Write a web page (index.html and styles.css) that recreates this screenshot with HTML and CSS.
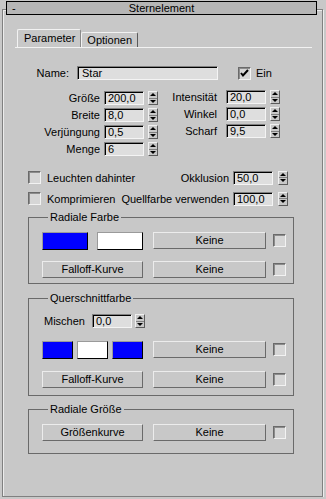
FILE: index.html
```html
<!DOCTYPE html>
<html>
<head>
	<title>Sternelement</title>
	<link rel="stylesheet" href="styles.css">
</head>
<body>
	<div class="rollout">
		<div class="rollout-title">
			<span class="minus">-</span>
			<span class="title">Sternelement</span>
		</div>

		<div class="tabs">
			<div class="tab active">Parameter</div>
			<div class="tab">Optionen</div>
		</div>

		<div class="name-row">
			<span class="name-label">Name:</span>
			<div class="field name-field">Star</div>
			<span class="check checked">
				<svg width="9" height="9" viewBox="0 0 9 9"><path d="M1 4 L3 6.5 L8 1" fill="none" stroke="#000" stroke-width="2"/></svg>
			</span>
			<span class="ein">Ein</span>
		</div>

		<div class="params">
			<div class="col col-left">
				<div class="prow"><span class="plabel">Größe</span><div class="field num">200,0</div><div class="spin"><i class="up"></i><i class="dn"></i></div></div>
				<div class="prow"><span class="plabel">Breite</span><div class="field num">8,0</div><div class="spin"><i class="up"></i><i class="dn"></i></div></div>
				<div class="prow"><span class="plabel">Verjüngung</span><div class="field num">0,5</div><div class="spin"><i class="up"></i><i class="dn"></i></div></div>
				<div class="prow"><span class="plabel">Menge</span><div class="field num">6</div><div class="spin"><i class="up"></i><i class="dn"></i></div></div>
			</div>
			<div class="col col-right">
				<div class="prow"><span class="plabel">Intensität</span><div class="field num">20,0</div><div class="spin"><i class="up"></i><i class="dn"></i></div></div>
				<div class="prow"><span class="plabel">Winkel</span><div class="field num">0,0</div><div class="spin"><i class="up"></i><i class="dn"></i></div></div>
				<div class="prow"><span class="plabel">Scharf</span><div class="field num">9,5</div><div class="spin"><i class="up"></i><i class="dn"></i></div></div>
			</div>
		</div>

		<div class="opts">
			<div class="orow">
				<span class="check"></span>
				<span class="otext">Leuchten dahinter</span>
				<span class="olabel">Okklusion</span>
				<div class="field num">50,0</div>
				<div class="spin"><i class="up"></i><i class="dn"></i></div>
			</div>
			<div class="orow">
				<span class="check"></span>
				<span class="otext">Komprimieren</span>
				<span class="olabel">Quellfarbe verwenden</span>
				<div class="field num">100,0</div>
				<div class="spin"><i class="up"></i><i class="dn"></i></div>
			</div>
		</div>

		<fieldset class="group group-radial">
			<legend>Radiale Farbe</legend>
			<div class="grow">
				<div class="left-part">
					<span class="swatch wide blue"></span>
					<span class="swatch wide white"></span>
				</div>
				<div class="btn keine">Keine</div>
				<span class="check"></span>
			</div>
			<div class="grow">
				<div class="btn curve">Falloff-Kurve</div>
				<div class="btn keine">Keine</div>
				<span class="check"></span>
			</div>
		</fieldset>

		<fieldset class="group group-cross">
			<legend>Querschnittfarbe</legend>
			<div class="mix-row">
				<span class="mix-label">Mischen</span>
				<div class="field num">0,0</div>
				<div class="spin"><i class="up"></i><i class="dn"></i></div>
			</div>
			<div class="grow">
				<div class="left-part">
					<span class="swatch narrow blue"></span>
					<span class="swatch narrow white"></span>
					<span class="swatch narrow blue"></span>
				</div>
				<div class="btn keine">Keine</div>
				<span class="check"></span>
			</div>
			<div class="grow">
				<div class="btn curve">Falloff-Kurve</div>
				<div class="btn keine">Keine</div>
				<span class="check"></span>
			</div>
		</fieldset>

		<fieldset class="group group-size">
			<legend>Radiale Größe</legend>
			<div class="grow">
				<div class="btn curve">Größenkurve</div>
				<div class="btn keine">Keine</div>
				<span class="check"></span>
			</div>
		</fieldset>
	</div>
</body>
</html>
```

FILE: styles.css
```css
body{
	margin: 0;
	background-color: #c8c8c8;
	font-family: "Liberation Sans", Arial, sans-serif;
	font-size: 11px;
	color: #000;
}
.rollout{
	margin: 9px 3px 0 2px;
	height: 488px;
	box-sizing: border-box;
	border: 1px solid #808080;
	box-shadow: inset 1px 1px 0 #ececec, 1px 1px 0 #ececec;
}
.rollout-title{
	margin: -9px 5px 0 3px;
	height: 14px;
	box-sizing: border-box;
	border: 1px solid #000;
	background-color: #b6b6b6;
	display: flex;
	align-items: center;
	line-height: 12px;
}
.minus{
	width: 10px;
	padding-left: 5px;
}
.title{
	flex: 1;
	text-align: center;
	padding-right: 15px;
}

/* tabs */
.tabs{
	display: flex;
	align-items: flex-end;
	margin: 14px 10px 0 12px;
	border-bottom: 1px solid #f2f2f2;
	height: 18px;
}
.tab{
	height: 15px;
	line-height: 14px;
	padding: 0 5px;
	border-top: 1px solid #f2f2f2;
	border-left: 1px solid #f2f2f2;
	border-right: 1px solid #5a5a5a;
	border-radius: 2px 2px 0 0;
	box-sizing: border-box;
}
.tab.active{
	height: 18px;
	line-height: 17px;
	margin-left: 2px;
	padding: 0 5px 0 6px;
	border-right-color: #8a8a8a;
}

/* generic controls */
.field{
	box-sizing: border-box;
	height: 14px;
	background-color: #dedede;
	border: 1px solid;
	border-color: #808080 #f4f4f4 #f4f4f4 #808080;
	box-shadow: inset 1px 1px 0 #000;
	line-height: 12px;
	padding-left: 3px;
	white-space: nowrap;
}
.num{
	width: 40px;
}
.spin{
	box-sizing: border-box;
	width: 10px;
	height: 14px;
	border: 1px solid;
	border-color: #f0f0f0 #5c5c5c #5c5c5c #f0f0f0;
	display: flex;
	flex-direction: column;
}
.spin i{
	flex: 1;
	display: flex;
	align-items: center;
	justify-content: center;
}
.spin i.up{
	border-bottom: 1px solid #808080;
}
.spin i.up::after{
	content: "";
	border-left: 3px solid transparent;
	border-right: 3px solid transparent;
	border-bottom: 3px solid #000;
}
.spin i.dn::after{
	content: "";
	border-left: 3px solid transparent;
	border-right: 3px solid transparent;
	border-top: 3px solid #000;
}
.check{
	box-sizing: border-box;
	width: 13px;
	height: 13px;
	flex: none;
	background-color: #d6d6d6;
	border: 1px solid;
	border-color: #6a6a6a #f2f2f2 #f2f2f2 #6a6a6a;
	box-shadow: inset 1px 1px 0 #8c8c8c;
	display: flex;
	align-items: center;
	justify-content: center;
}
.btn{
	box-sizing: border-box;
	height: 17px;
	border: 1px solid;
	border-color: #ececec #6a6a6a #6a6a6a #ececec;
	text-align: center;
	line-height: 15px;
}
.swatch{
	box-sizing: border-box;
	height: 18px;
	border: 1px solid;
	border-color: #9a9a9a #000 #000 #9a9a9a;
}
.swatch.blue{
	background-color: #0000ff;
}
.swatch.white{
	background-color: #ffffff;
}
.swatch.wide{
	width: 46px;
}
.swatch.narrow{
	width: 31px;
}

/* name row */
.name-row{
	display: flex;
	align-items: center;
	margin-top: 18px;
	height: 14px;
}
.name-label{
	width: 66px;
	text-align: right;
	margin-right: 8px;
}
.name-field{
	width: 141px;
	padding-left: 4px;
}
.name-row .check{
	margin-left: 20px;
}
.ein{
	margin-left: 5px;
}

/* parameter columns */
.params{
	display: flex;
	margin-top: 11px;
}
.col{
	display: flex;
	flex-direction: column;
	gap: 3px;
}
.col-right{
	margin-top: -1px;
}
.prow{
	display: flex;
	align-items: center;
	height: 14px;
}
.plabel{
	text-align: right;
	white-space: nowrap;
}
.col-left .plabel{
	width: 97px;
	margin-right: 4px;
}
.col-right .plabel{
	width: 59px;
	margin-right: 9px;
}
.prow .spin{
	margin-left: 4px;
}

/* options */
.opts{
	margin: 14px 34px 0 25px;
	display: flex;
	flex-direction: column;
	gap: 6px;
}
.orow{
	display: flex;
	align-items: center;
	height: 15px;
}
.otext{
	margin-left: 6px;
	flex: 1;
}
.olabel{
	margin-right: 4px;
}
.orow .spin{
	margin-left: 5px;
}

/* groups */
.group{
	margin: 0 0 0 25px;
	width: 266px;
	box-sizing: border-box;
	border: 1px solid #6a6a6a;
	padding: 0 0 0 13px;
}
.group legend{
	padding: 0 2px;
	margin-left: 6px;
	line-height: 13px;
}
.group-radial{
	margin-top: 5px;
	padding-top: 8px;
	padding-bottom: 5px;
}
.group-cross{
	margin-top: 8px;
	padding-top: 9px;
	padding-bottom: 7px;
}
.group-size{
	margin-top: 7px;
	padding-top: 8px;
	padding-bottom: 12px;
}
.grow{
	display: flex;
	align-items: center;
	height: 17px;
}
.grow + .grow{
	margin-top: 12px;
}
.group-cross .grow + .grow{
	margin-top: 13px;
}
.left-part{
	width: 101px;
	display: flex;
	justify-content: space-between;
}
.curve{
	width: 101px;
}
.keine{
	width: 113px;
	margin-left: 10px;
}
.grow .check{
	margin-left: 7px;
}
.mix-row{
	display: flex;
	align-items: center;
	height: 14px;
	margin-bottom: 13px;
}
.mix-label{
	margin-left: 2px;
	margin-right: 7px;
}
.mix-row .spin{
	margin-left: 3px;
}
```
